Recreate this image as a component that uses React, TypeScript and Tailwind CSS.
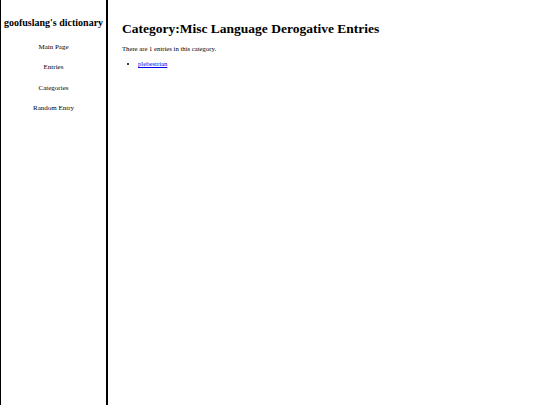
import React from "react";

export default function App() {
  return (
    <div className="flex min-h-[405px] bg-white text-black" style={{ fontFamily: '"Liberation Serif", serif' }}>
      <div className="w-[108px] shrink-0 border-l border-r-2 border-black h-[405px] flex flex-col items-center">
        <div className="mt-[17px] text-[10px] font-bold leading-[12px] whitespace-nowrap">goofuslang's dictionary</div>
        <div className="mt-[13px] flex flex-col items-center gap-[10.3px] text-[7px] leading-[10px]">
          <span>Main Page</span>
          <span>Entries</span>
          <span>Categories</span>
          <span>Random Entry</span>
        </div>
      </div>
      <div className="pl-[14px] pt-[20px]">
        <h1 className="text-[13.5px] font-bold leading-[17px]">Category:Misc Language Derogative Entries</h1>
        <p className="mt-[8px] text-[6.7px] leading-[8px]">There are 1 entries in this category.</p>
        <ul className="mt-[7px] pl-[16px] list-disc text-[6.7px] leading-[8px]">
          <li><a href="#" className="text-[#0000ee] underline">plebestrian</a></li>
        </ul>
      </div>
    </div>
  );
}
